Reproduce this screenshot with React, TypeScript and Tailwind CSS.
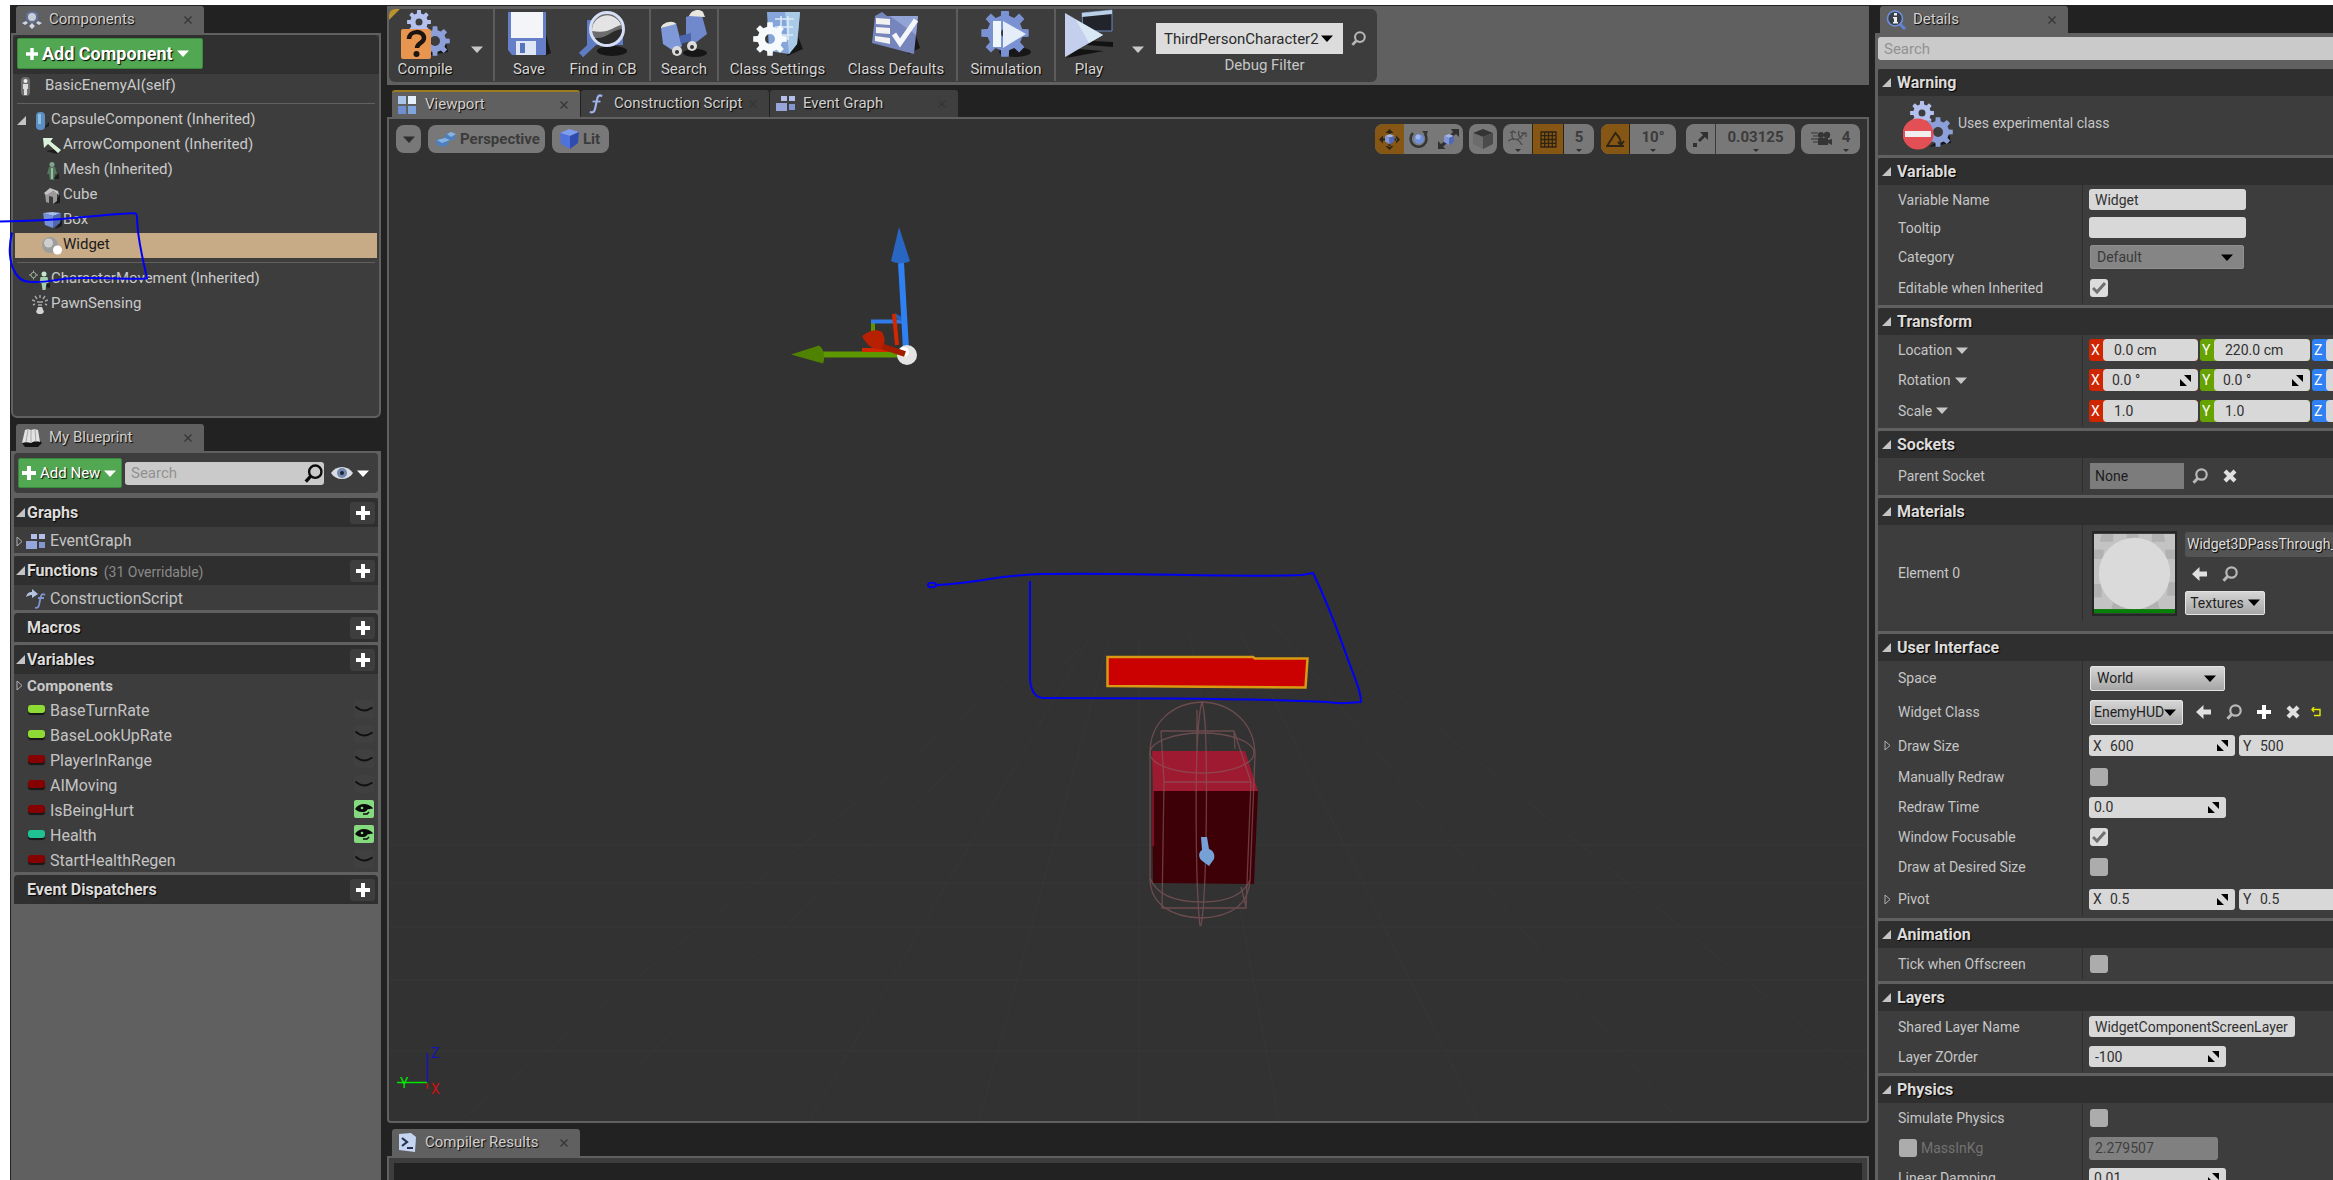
import { useState, type ReactNode } from "react";
import clsx from "clsx";

const SHADOW = "[text-shadow:1px_1px_1px_#000]";

/* ---------- small glyphs ---------- */

function Caret({ className = "fill-white" }: { className?: string }) {
  return (
    <svg width="12" height="7" viewBox="0 0 12 7" className={clsx("shrink-0", className)}>
      <path d="M0 0.5h12L6 7z" />
    </svg>
  );
}

function OpenTri() {
  return (
    <svg width="9" height="9" viewBox="0 0 9 9" className="shrink-0 fill-[#c4c4c4]">
      <path d="M9 0v9H0z" />
    </svg>
  );
}

function ClosedTri() {
  return (
    <svg width="7" height="11" viewBox="0 0 7 11" className="shrink-0 fill-none stroke-[#b0b0b0]">
      <path d="M1 1v9l5-4.500z" />
    </svg>
  );
}

function Plus({ size = 14 }: { size?: number }) {
  return (
    <svg width={size} height={size} viewBox="0 0 14 14" className="shrink-0 fill-white">
      <path d="M5 0h4v5h5v4H9v5H5V9H0V5h5z" />
    </svg>
  );
}

function CloseX() {
  return (
    <svg width="8" height="8" viewBox="0 0 8 8" className="shrink-0 fill-none stroke-[#363636]">
      <path d="M0.500 0.500l7 7M7.500 0.500l-7 7" strokeWidth="1.300" />
    </svg>
  );
}

function Magnifier({ size = 16, color = "#b8b8b8", width = 2.2 }: { size?: number; color?: string; width?: number }) {
  return (
    <svg width={size} height={size} viewBox="0 0 16 16" fill="none" stroke={color} className="shrink-0">
      <circle cx="9.500" cy="6.500" r="5.200" strokeWidth={width} />
      <path d="M5.500 10.500L1.500 14.800" strokeWidth={width + 0.8} />
    </svg>
  );
}

function BoldCross() {
  return (
    <svg width="14" height="14" viewBox="0 0 14 14" className="shrink-0 stroke-[#e0e0e0]">
      <path d="M2 2l10 10M12 2L2 12" strokeWidth="4.200" />
    </svg>
  );
}

function LeftArrow() {
  return (
    <svg width="15" height="14" viewBox="0 0 15 14" className="shrink-0 fill-[#e0e0e0]">
      <path d="M0 7l7.500-7v4.500H15v5H7.500V14z" />
    </svg>
  );
}

function SpinMark() {
  return (
    <svg width="11" height="11" viewBox="0 0 11 11" className="shrink-0 fill-black">
      <path d="M4 0h7v7zM0 4l7 7H0z" />
    </svg>
  );
}

function gearPath(cx: number, cy: number, outer: number, inner: number, teeth: number) {
  const step = (Math.PI * 2) / teeth;
  const pts: string[] = [];
  for (let i = 0; i < teeth; i++) {
    const a = i * step;
    [
      [inner, -0.3],
      [outer, -0.2],
      [outer, 0.2],
      [inner, 0.3],
    ].forEach(([r, o]) => {
      const t = a + o * step;
      pts.push(`${(cx + r * Math.cos(t)).toFixed(1)} ${(cy + r * Math.sin(t)).toFixed(1)}`);
    });
  }
  return `M${pts.join("L")}Z`;
}

function Gear({ x, y, r, hole, fill, teeth = 8 }: { x: number; y: number; r: number; hole: number; fill: string; teeth?: number }) {
  const h = `M${x - hole} ${y}a${hole} ${hole} 0 1 0 ${hole * 2} 0a${hole} ${hole} 0 1 0 ${-hole * 2} 0Z`;
  return <path d={gearPath(x, y, r, r * 0.74, teeth) + h} fill={fill} fillRule="evenodd" />;
}

/* ---------- tab icons ---------- */

function GridIcon() {
  return (
    <svg width="18" height="18" viewBox="0 0 18 18">
      <path d="M0 0h8v8H0z" fill="#a9c6ea" />
      <path d="M10 0h8v8h-8z" fill="#e6f2fb" />
      <path d="M0 10h8v8H0z" fill="#6f8fd0" />
      <path d="M10 10h8v8h-8z" fill="#7fa5dc" />
    </svg>
  );
}

function GraphIcon() {
  return (
    <svg width="20" height="17" viewBox="0 0 20 17">
      <path d="M5 1h6v5H5zM13 1h6v5h-6z" fill="#b3bfe6" />
      <path d="M0 8h11v8H0z" fill="#97a6da" />
      <path d="M13 9h6v6h-6z" fill="#8396d0" />
    </svg>
  );
}

function FuncIcon() {
  return (
    <svg width="18" height="20" viewBox="0 0 18 20" fill="none" stroke="#9fb1ea">
      <path d="M15 2.500c-2-2-4-1-4.700 2L8 15c-.7 3-3 4.500-5 2.500" strokeWidth="2.200" />
      <path d="M5.500 7.500h8" strokeWidth="1.800" />
    </svg>
  );
}

function ComponentsIcon() {
  return (
    <svg width="20" height="18" viewBox="0 0 20 18">
      <path d="M4 2l6-2 6 2v7l-6 4-6-4z" fill="#5f7099" />
      <circle cx="10" cy="6" r="4" fill="#c9cdd6" />
      <path d="M0 12l4-2 2 2-3 2zM20 12l-4-2-2 2 3 2zM7 15l3-3 3 3-3 3z" fill="#cfd6e6" />
    </svg>
  );
}

function BookIcon() {
  return (
    <svg width="20" height="18" viewBox="0 0 20 18">
      <path d="M0 14l3 4h13l4-4-3-3H3z" fill="#141414" />
      <path d="M3 1c2-1 4-1 6 0 2-1 5-1 7 0l2 12c-3-1-6-1-9 1-3-1-6-1-9 0z" fill="#e2e2e2" />
      <path d="M9 1v13M6 1L4 13M13 1l1 12" stroke="#a7a7a7" />
    </svg>
  );
}

function DetailsIcon() {
  return (
    <svg width="20" height="20" viewBox="0 0 20 20">
      <path d="M13 13l6 6" stroke="#5f83d8" strokeWidth="3" />
      <circle cx="9" cy="8.500" r="7.500" fill="#3a3f4c" stroke="#6f8fe0" strokeWidth="1.600" />
      <path d="M8 3h3v2.500H8zM7 7h4v5h1v1.500H7V12h1V8.500H7z" fill="#eee" />
    </svg>
  );
}

function ConsoleIcon() {
  return (
    <svg width="18" height="19" viewBox="0 0 18 19">
      <path d="M1 1l12-1 5 4-1 15-16-2z" fill="#c5d4f2" />
      <path d="M4 5l5 4-5 4" fill="none" stroke="#27324a" strokeWidth="2.200" />
      <path d="M9 15h6" stroke="#27324a" strokeWidth="2" />
    </svg>
  );
}

function GearsIcon({ children }: { children: ReactNode }) {
  return (
    <svg width="50" height="50" viewBox="0 0 50 50">
      <path d="M26 47l22-4-2-9z" fill="#151515" />
      <Gear x={19} y={13} r={12} hole={3.5} fill="#b4c1ee" />
      <Gear x={35} y={32} r={15} hole={5} fill="#8d9fd8" />
      {children}
    </svg>
  );
}

/* ---------- toolbar icons ---------- */

const toolIcons = {
  compile: (
    <GearsIcon>
      <rect x="1" y="20" width="30" height="30" rx="2" fill="#e8954f" />
      <path d="M9 30c0-9 15-9 15-1 0 5-7 5-7 10" fill="none" stroke="#1c1510" strokeWidth="4.500" />
      <circle cx="16.500" cy="45" r="3" fill="#1c1510" />
    </GearsIcon>
  ),
  save: (
    <svg width="44" height="46" viewBox="0 0 44 46">
      <path d="M38 20l6 22-6 3z" fill="#1b1b1b" />
      <path d="M1 1h38v43H5l-4-5z" fill="#6580c8" />
      <path d="M4 1h32v26H4z" fill="#f4f5f8" />
      <path d="M9 30h20v14H9z" fill="#dfe6f5" />
      <path d="M13 32h5v10h-5z" fill="#5673bd" />
    </svg>
  ),
  find: (
    <svg width="50" height="48" viewBox="0 0 50 48">
      <ellipse cx="34" cy="41" rx="15" ry="5" fill="#161616" />
      <path d="M9 10h36v25H9z" fill="#5f7bc4" />
      <path d="M18 31L3 45" stroke="#5f7bc4" strokeWidth="6" />
      <circle cx="29" cy="19" r="16.500" fill="#6c6c6c" stroke="#d5def5" strokeWidth="3" />
      <path d="M14 21a15 15 0 0 1 29-6c-8 2-12 9-29 6z" fill="#e4e4e4" />
      <path d="M17 28c12 1 18-9 27-9 0 12-17 22-27 9z" fill="#2b2b2b" />
    </svg>
  ),
  search: (
    <svg width="48" height="48" viewBox="0 0 48 48">
      <ellipse cx="35" cy="43" rx="12" ry="4" fill="#161616" />
      <path d="M1 18l15-5 6 23-7 6-12-8z" fill="#7f98d8" />
      <path d="M26 7l15-5 6 22-13 10-8-7z" fill="#7089cc" />
      <path d="M19 26l12-3v8l-10 3z" fill="#4c66ae" />
      <path d="M1 18c0-5 12-9 15-4zM29 6c2-6 10-8 14-4l2 5z" fill="#e9e6df" />
      <circle cx="17" cy="41" r="5" fill="#dcdcdc" />
      <circle cx="32" cy="36" r="5" fill="#dcdcdc" />
      <circle cx="17" cy="42" r="2" fill="#333" />
      <circle cx="32" cy="37" r="2" fill="#333" />
    </svg>
  ),
  settings: (
    <svg width="50" height="46" viewBox="0 0 50 46">
      <path d="M42 18l8 20-16 7z" fill="#171717" />
      <path d="M14 1h33l-3 32-8 10-20-3z" fill="#86a5da" />
      <path d="M32 1h15l-3 32-8 10z" fill="#a9cbe8" />
      <path d="M22 8h19M22 16h18M26 24h14M28 5v24M35 5v24" stroke="#dcecf8" strokeWidth="1.500" />
      <Gear x={17} y={28} r={17} hole={5} fill="#f6fafc" />
    </svg>
  ),
  defaults: (
    <svg width="48" height="44" viewBox="0 0 48 44">
      <path d="M42 18l6 18-12 6z" fill="#171717" />
      <path d="M3 4l7-4 5 4h31l-4 38L0 31z" fill="#7686bd" />
      <path d="M18 4h28l-2 19z" fill="#92a3d6" />
      <path d="M4 6l14 1v6l-14-1zM4 15l14 1v6l-14-1zM3 24l15 2v6L3 29z" fill="#f2f2f2" />
      <path d="M22 22l6 9L44 8" fill="none" stroke="#f4f6fa" strokeWidth="5" />
    </svg>
  ),
  simulation: (
    <svg width="50" height="46" viewBox="0 0 50 46">
      <ellipse cx="34" cy="41" rx="16" ry="5" fill="#171717" />
      <Gear x={24} y={22} r={24} hole={4} fill="#7b92d2" />
      <path d="M12 10h8v26h-8z" fill="#eef6fa" />
      <path d="M22 10l23 13-23 14z" fill="#e4edf8" />
    </svg>
  ),
  play: (
    <svg width="50" height="50" viewBox="0 0 50 50">
      <path d="M2 49l12-9 26 2zM27 32l22 1v5l-26-2z" fill="#131313" />
      <path d="M18 4l30-3v21H19z" fill="#22242b" stroke="#6c8bbd" />
      <path d="M18 4l30-3v4L18 8z" fill="#b9d0e8" />
      <path d="M1 4l38 22L1 48z" fill="#c3cfec" />
      <path d="M12 11l27 15-14 8z" fill="#d7e8f4" />
    </svg>
  ),
};

/* ---------- shared pieces ---------- */

interface TabProps {
  icon: ReactNode;
  label: string;
  active?: boolean;
  accent?: boolean;
}

function Tab({ icon, label, active = true, accent = false }: TabProps) {
  return (
    <button
      type="button"
      className={clsx(
        "flex h-[27px] w-[188px] shrink-0 items-center rounded-t-[3px] pl-1.5 pr-3 text-left",
        active ? "bg-[#606060]" : "bg-[#3f3f3f]",
        accent && "border-t-2 border-[#9a7b1f]",
      )}
    >
      <span className="flex w-[27px] shrink-0 items-center">{icon}</span>
      <span className={clsx("flex-1 whitespace-nowrap pb-0.5 text-[15px] leading-5 text-[#d0d0d0]", SHADOW)}>{label}</span>
      <CloseX />
    </button>
  );
}

/* ---------- components panel ---------- */

const treeIcons: Record<string, ReactNode> = {
  self: (
    <svg width="12" height="20" viewBox="0 0 12 20">
      <rect x="1" width="9" height="19" rx="4" fill="#6f6f6f" />
      <circle cx="5.500" cy="4" r="2" fill="#eee" />
      <path d="M3 7h5v5H7v6H4v-6H3z" fill="#ddd" />
    </svg>
  ),
  capsule: (
    <svg width="14" height="18" viewBox="0 0 14 18">
      <path d="M8 17l6-3v-4z" fill="#1c1c1c" />
      <rect x="1" width="9" height="18" rx="4" fill="#5b8fc4" />
      <path d="M3 2h3v10H3z" fill="#8fbfe0" />
    </svg>
  ),
  arrow: (
    <svg width="18" height="16" viewBox="0 0 18 16">
      <path d="M3 13l11 3v-5z" fill="#1c1c1c" />
      <path d="M0 0h10L7.500 3.500 18 12l-3 3L5 6l-4 4z" fill="#d9f2d9" />
    </svg>
  ),
  mesh: (
    <svg width="16" height="18" viewBox="0 0 16 18">
      <path d="M9 17l6 0v-6z" fill="#1c1c1c" />
      <circle cx="8" cy="2.500" r="2.500" fill="#7fa58a" />
      <path d="M5 5h6l2 7h-2l-1 6H6l-1-6H3z" fill="#55775f" />
      <path d="M7 6h2v11H7z" fill="#93bf9e" />
    </svg>
  ),
  cube: (
    <svg width="17" height="17" viewBox="0 0 17 17">
      <path d="M9 17l7-1V8z" fill="#1c1c1c" />
      <path d="M1 6l5-3 7 3v8l-4 3V10L5 9v7l-3-1z" fill="#9a9a9a" />
      <path d="M0 6l6-5 8 3 1 4-6-4-7 4z" fill="#c4c4c4" />
    </svg>
  ),
  box: (
    <svg width="19" height="17" viewBox="0 0 19 17">
      <path d="M12 17l7-3V7z" fill="#1c1c1c" />
      <path d="M0 1l9-1 9 1-8 3z" fill="#a6bdf0" />
      <path d="M0 1l10 3v12L2 13z" fill="#7590d8" />
      <path d="M10 4l8-3-1 10-7 5z" fill="#4f68b4" />
    </svg>
  ),
  widget: (
    <svg width="20" height="18" viewBox="0 0 20 18">
      <circle cx="8" cy="8" r="8" fill="#9d9d9d" />
      <circle cx="6.500" cy="6" r="4.500" fill="#cfcfcf" />
      <circle cx="15.500" cy="13" r="4.500" fill="#fff" />
    </svg>
  ),
  movement: (
    <svg width="22" height="20" viewBox="0 0 22 20">
      <circle cx="4.500" cy="5" r="2.600" fill="none" stroke="#9db59d" />
      <path d="M4.500 0.500v2M4.500 7.500v2M0 5h2M7 5h2" stroke="#9db59d" />
      <path d="M13 16l8 2v-5z" fill="#1c1c1c" />
      <circle cx="15" cy="4" r="2.500" fill="#c4e8cf" />
      <path d="M11.500 7h7l1 6h-2l-1 7h-3l-1-7h-2z" fill="#a5cfb1" />
    </svg>
  ),
  sensing: (
    <svg width="16" height="20" viewBox="0 0 16 20" stroke="#a8a8a8" fill="none">
      <path d="M8 0v3M3 1l2 3M13 1l-2 3M0 5l3 1M16 5l-3 1M1 10l2-1M15 10l-2-1M5 7h6M6 10h4" strokeWidth="1.400" />
      <path d="M6 12h4l2 5-2 2H6l-2-2z" fill="#d2d2d2" stroke="none" />
    </svg>
  ),
};

interface TreeRowProps {
  icon: string;
  label: string;
  indent: string;
  open?: boolean;
  selected?: boolean;
}

function TreeRow({ icon, label, indent, open, selected }: TreeRowProps) {
  return (
    <button
      type="button"
      className={clsx(
        "mx-0.5 flex h-[25px] items-center text-left text-[15px] leading-5",
        indent,
        selected ? "bg-[#c7ab87] text-[#1a1a1a]" : "text-[#cacaca]",
      )}
    >
      {open && <OpenTri />}
      <span className={clsx("flex shrink-0 items-center justify-center", open ? "ml-[7px] w-[18px]" : "w-[22px]")}>
        {treeIcons[icon]}
      </span>
      <span className={clsx("whitespace-nowrap pb-1", icon === "self" && "ml-2")}>{label}</span>
    </button>
  );
}

function ComponentsPanel() {
  return (
    <section className="flex h-[413px] shrink-0 flex-col">
      <div className="flex pl-[5px] pt-px">
        <Tab icon={<ComponentsIcon />} label="Components" />
      </div>
      <div className="flex flex-1 flex-col rounded-b-md border-2 border-[#606060] bg-[#3d3d3d]">
        <div className="rounded-t-md bg-[#303030] px-1 pb-[5px] pt-[3px]">
          <button
            type="button"
            className={clsx(
              "flex h-[31px] w-[186px] items-center rounded-[2px] border border-[#3a8a3d] bg-[#52a852] pl-2 text-lg font-bold leading-6 text-white",
              SHADOW,
            )}
          >
            <Plus size={12} />
            <span className="ml-1 whitespace-nowrap">Add Component</span>
            <span className="ml-1 flex"><Caret /></span>
          </button>
        </div>
        <div className="flex flex-col">
          <TreeRow icon="self" label="BasicEnemyAI(self)" indent="" />
          <div className="mx-1 my-1 h-px bg-[#606060]" />
          <TreeRow icon="capsule" label="CapsuleComponent (Inherited)" indent="pl-0.5" open />
          <TreeRow icon="arrow" label="ArrowComponent (Inherited)" indent="pl-[26px]" />
          <TreeRow icon="mesh" label="Mesh (Inherited)" indent="pl-[26px]" />
          <TreeRow icon="cube" label="Cube" indent="pl-[26px]" />
          <TreeRow icon="box" label="Box" indent="pl-[26px]" />
          <TreeRow icon="widget" label="Widget" indent="pl-[26px]" selected />
          <div className="mx-1 mb-1 mt-1 h-px bg-[#606060]" />
          <TreeRow icon="movement" label="CharacterMovement (Inherited)" indent="pl-3.5" />
          <TreeRow icon="sensing" label="PawnSensing" indent="pl-3.5" />
        </div>
      </div>
    </section>
  );
}

/* ---------- my blueprint panel ---------- */

const VARIABLES = [
  { name: "BaseTurnRate", pill: "bg-[#8fdb35]", visible: false },
  { name: "BaseLookUpRate", pill: "bg-[#8fdb35]", visible: false },
  { name: "PlayerInRange", pill: "bg-[#860202]", visible: false },
  { name: "AIMoving", pill: "bg-[#860202]", visible: false },
  { name: "IsBeingHurt", pill: "bg-[#860202]", visible: true },
  { name: "Health", pill: "bg-[#1fc193]", visible: true },
  { name: "StartHealthRegen", pill: "bg-[#860202]", visible: false },
];

function SectionHead({ title, note, open }: { title: string; note?: string; open?: boolean }) {
  return (
    <div className="flex h-[29px] items-center rounded-t-[4px] bg-[#2f2f2f] pl-0.5 pr-[3px]">
      <span className="flex w-[11px]">{open && <OpenTri />}</span>
      <h3 className={clsx("whitespace-nowrap text-base font-bold leading-5 text-[#dcdcdc]", SHADOW)}>{title}</h3>
      {note && <span className="ml-1.5 pt-0.5 text-sm leading-5 text-[#8a8a8a]">{note}</span>}
      <button type="button" aria-label={`Add ${title}`} className="ml-auto flex h-[22px] w-[25px] items-center justify-center rounded-[3px] bg-[#3e3e3e]">
        <Plus size={14} />
      </button>
    </div>
  );
}

function VariableRow({ name, pill, visible }: (typeof VARIABLES)[number]) {
  return (
    <li className="flex h-[25px] items-center pl-3.5 pr-1 pt-[3px]">
      <span className={clsx("mb-1 h-2 w-[17px] rounded-[3px] shadow-[0_2px_1px_#161616]", pill)} />
      <span className="ml-[5px] text-base leading-5 text-[#c4c4c4]">{name}</span>
      <button
        type="button"
        aria-label={`Toggle ${name}`}
        className={clsx("mb-1 ml-auto flex h-[18px] w-5 items-center justify-center rounded-[2px]", visible ? "bg-[#85d97f]" : "bg-[#404040]")}
      >
        {visible ? (
          <svg width="18" height="12" viewBox="0 0 18 12">
            <path d="M0 6c4-6 12-7 18-1l-1 1c-2-1-2 1-4 0-2 3-4 3-6 3-3 0-5-1-7-3z" fill="#0a0a0a" />
            <circle cx="7" cy="5" r="1.300" fill="#85d97f" />
            <path d="M8 11h4l2-2" fill="none" stroke="#0a0a0a" strokeWidth="1.500" />
          </svg>
        ) : (
          <svg width="18" height="8" viewBox="0 0 18 8" fill="none" stroke="#101010">
            <path d="M0.500 1.500c5 5 11 5 17 1" strokeWidth="1.800" />
          </svg>
        )}
      </button>
    </li>
  );
}

function BlueprintPanel() {
  return (
    <section className="flex min-h-0 flex-1 flex-col">
      <div className="flex pl-[5px]">
        <Tab icon={<BookIcon />} label="My Blueprint" />
      </div>
      <div className="flex flex-1 flex-col gap-[3px] bg-[#606060] px-[3px] pt-0.5">
        <div className="mb-0.5 flex h-10 items-center rounded-[4px] bg-[#3d3d3d] pl-1">
          <button
            type="button"
            className={clsx(
              "flex h-[30px] w-[104px] items-center rounded-[2px] border border-[#3a8a3d] bg-[#52a852] pl-[3px] text-[15px] leading-5 text-white",
              SHADOW,
            )}
          >
            <Plus size={14} />
            <span className="ml-1 whitespace-nowrap">Add New</span>
            <span className="ml-1 flex"><Caret /></span>
          </button>
          <label className="ml-[3px] flex h-[23px] w-[199px] items-center rounded-[3px] bg-[#cacaca] pl-1.5 pr-px">
            <input aria-label="Search blueprint" placeholder="Search" className="min-w-0 flex-1 bg-transparent text-[15px] leading-5 outline-none placeholder:text-[#929292]" />
            <Magnifier size={19} color="#0c0c0c" width={2} />
          </label>
          <button type="button" aria-label="View options" className="ml-[7px] flex items-center gap-1">
            <svg width="22" height="14" viewBox="0 0 22 14">
              <path d="M0 7c5-8 17-8 22 0-5 8-17 8-22 0z" fill="#d9dce2" />
              <circle cx="11" cy="7" r="5" fill="#7288ad" />
              <circle cx="11" cy="7" r="2" fill="#1d2433" />
            </svg>
            <Caret />
          </button>
        </div>
        <div className="bg-[#3d3d3d]">
          <SectionHead title="Graphs" open />
          <div className="flex h-[26px] items-center pl-0.5 pt-0.5 text-base leading-5 text-[#c4c4c4]">
            <ClosedTri />
            <span className="ml-[3px] mr-1 flex"><GraphIcon /></span>
            EventGraph
          </div>
        </div>
        <div className="bg-[#3d3d3d]">
          <SectionHead title="Functions" note="(31 Overridable)" open />
          <div className="flex h-[25px] items-center pl-3 pt-0.5 text-base leading-5 text-[#c4c4c4]">
            <svg width="20" height="20" viewBox="0 0 20 20" className="mr-1" fill="none">
              <path d="M0 8c1-4 3-5 6-5V0l6 5-6 4V6C3 6 2 7 0 8z" fill="#b5c4e4" />
              <path d="M19 6c-3-2-4 0-4.500 3L13 16c-.6 2.500-2 3.500-4 2.500M12 9h6" stroke="#7f95d2" strokeWidth="1.800" />
            </svg>
            ConstructionScript
          </div>
        </div>
        <SectionHead title="Macros" />
        <div className="bg-[#3d3d3d]">
          <SectionHead title="Variables" open />
          <div className="flex h-[23px] items-center pl-0.5 text-[15px] font-bold leading-5 text-[#c8c8c8]">
            <ClosedTri />
            <span className="ml-1">Components</span>
          </div>
          <ul>
            {VARIABLES.map((v) => (
              <VariableRow key={v.name} {...v} />
            ))}
          </ul>
        </div>
        <SectionHead title="Event Dispatchers" />
      </div>
    </section>
  );
}

/* ---------- toolbar ---------- */

function ToolButton({ icon, label, width }: { icon: ReactNode; label: string; width: string }) {
  return (
    <button type="button" className={clsx("flex shrink-0 flex-col items-center", width)}>
      <span className="flex h-[50px] items-center">{icon}</span>
      <span className={clsx("whitespace-nowrap text-[15px] leading-5 text-[#d6d6d6]", SHADOW)}>{label}</span>
    </button>
  );
}

function Divider() {
  return <div className="h-[72px] w-0.5 shrink-0 bg-[#5c5c5c]" />;
}

function Toolbar() {
  return (
    <div className="mt-px h-[79px] bg-[#606060] py-[3px] pl-0.5">
      <div className="flex h-[73px] w-[988px] overflow-hidden rounded-md bg-[#3d3d3d]">
        <svg width="11" height="11" viewBox="0 0 11 11" className="-mr-[11px] fill-[#b8922a]"><path d="M0 0h11L0 11z" /></svg>
        <ToolButton icon={toolIcons.compile} label="Compile" width="ml-1.5 w-[60px]" />
        <button type="button" aria-label="Compile options" className="ml-4 mr-[10px] pt-2"><Caret className="fill-[#c8c8c8]" /></button>
        <Divider />
        <ToolButton icon={toolIcons.save} label="Save" width="w-[68px]" />
        <ToolButton icon={toolIcons.find} label="Find in CB" width="mr-1.5 w-[80px]" />
        <Divider />
        <ToolButton icon={toolIcons.search} label="Search" width="w-[66px]" />
        <Divider />
        <ToolButton icon={toolIcons.settings} label="Class Settings" width="w-[117px]" />
        <ToolButton icon={toolIcons.defaults} label="Class Defaults" width="w-[120px]" />
        <Divider />
        <ToolButton icon={toolIcons.simulation} label="Simulation" width="w-24" />
        <Divider />
        <ToolButton icon={toolIcons.play} label="Play" width="w-[66px]" />
        <button type="button" aria-label="Play options" className="ml-2.5 pt-2"><Caret className="fill-[#c8c8c8]" /></button>
        <div className="ml-3 flex flex-col pt-3.5">
          <div className="flex items-center">
            <label className="relative flex h-[31px] w-[187px] items-center bg-[#dcdcdc]">
              <select aria-label="Debug Filter" className="h-full w-full appearance-none pl-2 text-[15px] leading-5 text-[#2a2a2a] outline-none">
                <option>ThirdPersonCharacter2</option>
              </select>
              <span className="pointer-events-none absolute right-2.5 flex"><Caret className="fill-black" /></span>
            </label>
            <span className="ml-2 flex"><Magnifier size={15} /></span>
          </div>
          <span className="w-[217px] text-center text-[15px] leading-[22px] text-[#c6c6c6]">Debug Filter</span>
        </div>
      </div>
    </div>
  );
}

/* ---------- viewport ---------- */

const PILL = "flex items-center bg-[#787878] text-[15px] font-bold leading-5 text-[#3b3b3b]";

function DownValue({ text, width }: { text: string; width: string }) {
  return (
    <button type="button" className={clsx("flex h-full flex-col items-center justify-center pt-1", width)}>
      <span className="leading-4">{text}</span>
      <svg width="6" height="4" viewBox="0 0 6 4" className="mt-1 fill-[#303030]"><path d="M0 0h6L3 3z" /></svg>
    </button>
  );
}

function MiniCube({ x, y, s }: { x: number; y: number; s: number }) {
  return (
    <g transform={`translate(${x} ${y}) scale(${s})`}>
      <path d="M0 2l5-2 5 2-5 2z" fill="#a5b6e6" />
      <path d="M0 2l5 2v7L0 8z" fill="#7f96d8" />
      <path d="M10 2L5 4v7l5-3z" fill="#4f69b8" />
    </g>
  );
}

function ViewportBar() {
  return (
    <div className="absolute inset-x-0 top-0 flex items-center gap-[7px] px-[7px] pt-[5px]">
      <button type="button" aria-label="Viewport options" className={clsx(PILL, "h-7 w-[25px] justify-center rounded-lg")}>
        <Caret className="fill-[#2e2e2e]" />
      </button>
      <button type="button" className={clsx(PILL, "h-7 w-[117px] rounded-lg pl-2")}>
        <svg width="20" height="16" viewBox="0 0 20 16">
          <path d="M0 9l9-3 2-4 8 1v5l-6 2-1 4-7 2-5-3z" fill="#4f7fbd" />
          <path d="M1 9l8-2 5 2-8 3zM11 3l4-2 5 2-5 3z" fill="#86b3e2" />
        </svg>
        <span className="ml-1">Perspective</span>
      </button>
      <button type="button" className={clsx(PILL, "h-7 w-[57px] rounded-lg pl-2")}>
        <svg width="19" height="20" viewBox="0 0 19 20">
          <path d="M0 4l9-4 10 3-9 4z" fill="#7d9df0" />
          <path d="M0 4l10 3v13L1 15z" fill="#4f72dc" />
          <path d="M19 3l-9 4v13l8-6z" fill="#2f4cae" />
        </svg>
        <span className="ml-1">Lit</span>
      </button>

      <div className={clsx(PILL, "ml-auto h-[30px] overflow-hidden rounded-lg")}>
        <button type="button" aria-label="Move" className="flex h-full w-[29px] items-center justify-center bg-[#855614]">
          <svg width="21" height="21" viewBox="0 0 21 21" fill="#2e2413">
            <path d="M10.500 0l4 4h-8zM10.500 21l4-4h-8zM0 10.500l4-4v8zM21 10.500l-4-4v8zM9.500 3h2v15h-2zM3 9.500h15v2H3z" />
            <MiniCube x={6} y={5} s={0.95} />
          </svg>
        </button>
        <button type="button" aria-label="Rotate" className="flex h-full w-[29px] items-center justify-center">
          <svg width="20" height="20" viewBox="0 0 20 20" fill="none">
            <path d="M4 4a8 8 0 1 0 12 1" stroke="#353535" strokeWidth="2.500" />
            <path d="M13 2h6l-2 5z" fill="#353535" />
            <circle cx="10" cy="10" r="5" fill="#6f8fd8" />
            <circle cx="9" cy="8" r="2.500" fill="#9fb6ee" />
          </svg>
        </button>
        <button type="button" aria-label="Scale" className="flex h-full w-[30px] items-center justify-center">
          <svg width="21" height="20" viewBox="0 0 21 20" fill="#303030">
            <path d="M13 0h8v8l-3-3-5 4-2-2 4-4zM0 20v-8l3 3 4-3 2 2-4 4 3 2z" />
            <MiniCube x={6} y={5} s={1} />
          </svg>
        </button>
      </div>
      <button type="button" aria-label="Coordinate space" className={clsx(PILL, "-ml-px h-[30px] w-[28px] justify-center rounded-lg")}>
        <svg width="20" height="20" viewBox="0 0 20 20">
          <path d="M0 4l10-4 10 4-10 4z" fill="#343434" />
          <path d="M0 4l10 4v12L0 15z" fill="#6c6c6c" />
          <path d="M20 4L10 8v12l10-5z" fill="#4b4b4b" />
        </svg>
      </button>
      <div className={clsx(PILL, "-ml-px h-[30px] overflow-hidden rounded-lg")}>
        <button type="button" aria-label="Surface snapping" className="flex h-full w-[29px] flex-col items-center justify-center pt-1">
          <svg width="19" height="15" viewBox="0 0 19 15" fill="none" stroke="#4a4a4a" strokeWidth="1.300">
            <path d="M0 11c6-4 11-2 14 4M5 1C3 5 4 8 6 10M2 3l3-2 3 2M9 10l8-7M13 3h5v4M11 1c-1 3 0 6 3 8" />
          </svg>
          <svg width="6" height="4" viewBox="0 0 6 4" className="mt-1 fill-[#303030]"><path d="M0 0h6L3 3z" /></svg>
        </button>
        <button type="button" aria-label="Grid snapping" className="flex h-full w-8 items-center justify-center border-x border-[#2e2413] bg-[#855614]">
          <svg width="17" height="17" viewBox="0 0 17 17" fill="none" stroke="#2e2413" strokeWidth="1.300">
            <path d="M1 1h15v15H1zM4.700 1v15M8.500 1v15M12.300 1v15M1 4.700h15M1 8.500h15M1 12.300h15" />
          </svg>
        </button>
        <DownValue text="5" width="w-[30px]" />
      </div>
      <div className={clsx(PILL, "h-[30px] overflow-hidden rounded-lg")}>
        <button type="button" aria-label="Rotation snapping" className="flex h-full w-[29px] items-center justify-center border-r border-[#2e2413] bg-[#855614]">
          <svg width="19" height="18" viewBox="0 0 19 18" fill="none" stroke="#2e2413" strokeWidth="1.800">
            <path d="M10 2L1 16h17M9 3c4 3 6 7 6 12M12 12l3 3 3-4" />
          </svg>
        </button>
        <DownValue text="10°" width="w-[46px]" />
      </div>
      <div className={clsx(PILL, "ml-[3px] h-[30px] overflow-hidden rounded-lg")}>
        <button type="button" aria-label="Scale snapping" className="flex h-full w-[30px] items-center justify-center border-r border-[#3a3a3a]">
          <svg width="15" height="15" viewBox="0 0 15 15" fill="#303030">
            <path d="M7 0h8v8l-3-3-5 5-2-2 5-5zM0 11h4v4H0z" />
          </svg>
        </button>
        <DownValue text="0.03125" width="w-[79px]" />
      </div>
      <div className={clsx(PILL, "-ml-px h-[30px] rounded-lg")}>
        <span className="ml-2.5 flex">
          <svg width="21" height="16" viewBox="0 0 21 16" fill="#353535">
            <path d="M0 2h7M2 5h6M0 8h7M2 11h6" stroke="#4b4b4b" strokeWidth="1.300" />
            <circle cx="10" cy="4" r="3" />
            <circle cx="16" cy="4" r="3.200" />
            <path d="M7 7h10v2l4-1v6l-4-2v2H7z" />
          </svg>
        </span>
        <DownValue text="4" width="w-[28px]" />
      </div>
    </div>
  );
}

function Scene() {
  return (
    <svg viewBox="0 0 1478 1002" preserveAspectRatio="xMidYMid slice" className="h-full w-full">
      {/* floor grid */}
      <g stroke="#373737" strokeWidth="1" fill="none">
        <path d="M0 932h1478M0 861h1478M0 808h1478M0 764h1478M0 726h1478" />
        <path d="M620 560L70 1002M690 530L190 1002M700 520L420 1002M720 520L590 1002M750 520V1002M800 510L890 1002M850 510L1090 1002M880 500L1290 1002M940 520L1478 960" />
      </g>

      {/* transform gizmo */}
      <g fill="none">
        <path d="M484 224V203" stroke="#5c9600" strokeWidth="4" />
        <path d="M482 202.500h32" stroke="#2f7be8" strokeWidth="4" />
        <path d="M505 196l11 6" stroke="#2562bd" strokeWidth="4" />
        <path d="M512 144l5 86" stroke="#2f80f2" strokeWidth="6" />
        <path d="M505 195l3 31" stroke="#d22700" strokeWidth="4" />
        <path d="M428 235.500h84" stroke="#5e9800" strokeWidth="6" />
        <path d="M473 231h30" stroke="#d22700" strokeWidth="4" />
      </g>
      <path d="M510 108l11 34c-5 3-14 3-19 0z" fill="#2866c2" />
      <path d="M402 235.500l28-9c6 4 6 14 4 18z" fill="#4f8200" />
      <circle cx="518" cy="236" r="10" fill="#e4e4e4" />
      <circle cx="515" cy="233" r="5" fill="#fff" />
      <path d="M492 227l24 8" stroke="#a31c00" strokeWidth="6" />
      <path d="M473 217c6-5 14-8 20-4 4 6 3 13-1 17-8 1-14-3-19-13z" fill="#b72000" />

      {/* health bar widget */}
      <path d="M718.500 538H864l2 1.500h52.500l-2 29-198-1.500z" fill="#cb0000" stroke="#d89a12" strokeWidth="2.500" />

      {/* enemy cube */}
      <path d="M763 632h93l13 40-105 1z" fill="#9e1a30" />
      <path d="M763 672h106l-4 93-101-1z" fill="#3e0007" />
      <path d="M764 672v55" stroke="#7a1424" strokeWidth="2" />

      {/* collision wireframe */}
      <g fill="none" stroke="#8a5a5e" strokeWidth="1.300" opacity="0.650">
        <path d="M761 634c0-30 22-50 52-51 30 1 53 22 53 53l-5 126c-2 26-22 36-49 37-30-1-51-14-51-40z" />
        <ellipse cx="813" cy="634" rx="52" ry="20" />
        <path d="M761 759c6 16 24 24 52 24 26 0 42-8 48-22" />
        <path d="M772 612h73l1 18M772 612l3 51h87l-17-51M775 663l-2 126h84l5-126M813 583c-9 30-6 190-2 224M813 583c7 20 5 190-1 224M808 631v-40M852 768l5 20" />
      </g>
      <path d="M801 718h6l2 12c5 2 6 6 5 10l-5 7-8-6c-3-4-2-8 1-10z" fill="#75a1d6" transform="translate(11 0)" />

      {/* pen annotation */}
      <path
        d="M548 466c-3 3-9 3-9 0s8-3 8 0c36-1 62-10 106-11 95-2 190 4 260 1l11-2c20 41 30 74 40 100 5 12 8 23 8 29-10 1-24 2-34 0-86-4-190-4-283-4-10 0-13-8-14-18V462"
        fill="none"
        stroke="#0000f5"
        strokeWidth="2"
        strokeLinejoin="round"
      />

      {/* world axes */}
      <g fill="none" strokeWidth="1.500">
        <path d="M8 963.500h30" stroke="#00e600" />
        <path d="M38.500 963V934" stroke="#1414b8" />
        <path d="M38.500 964v6" stroke="#d01010" />
      </g>
      <g fontFamily="Roboto, sans-serif" fontSize="14">
        <text x="42" y="939" fill="#1414b8">Z</text>
        <text x="11" y="969" fill="#00e600">Y</text>
        <text x="42" y="975" fill="#d01010">X</text>
      </g>
    </svg>
  );
}

function Viewport() {
  return (
    <div className="relative min-h-0 flex-1 overflow-hidden rounded-b-[4px] border-2 border-[#606060] bg-[#323232]">
      <Scene />
      <ViewportBar />
    </div>
  );
}

/* ---------- details panel ---------- */

function Category({ title, children }: { title: string; children: ReactNode }) {
  return (
    <section className="mb-[3px] bg-[#3d3d3d] pb-0.5">
      <h3 className={clsx("flex h-[27px] items-center gap-1.5 rounded-tl-[4px] bg-[#2f2f2f] pl-1 text-base font-bold leading-5 text-[#dcdcdc]", SHADOW)}>
        <OpenTri />
        {title}
      </h3>
      {children}
    </section>
  );
}

interface RowProps {
  label: string;
  height: string;
  caret?: boolean;
  expandable?: boolean;
  children: ReactNode;
}

function Row({ label, height, caret, expandable, children }: RowProps) {
  return (
    <div className={clsx("flex", height)}>
      <div className="flex w-[205px] shrink-0 items-center border-r border-[#2e2e2e] pl-1.5 text-sm leading-5 text-[#c6c6c6]">
        <span className="flex w-3.5">{expandable && <ClosedTri />}</span>
        <span className="whitespace-nowrap">{label}</span>
        {caret && <span className="ml-1 flex"><Caret className="fill-[#c6c6c6]" /></span>}
      </div>
      <div className="flex shrink-0 items-center pl-1.5">{children}</div>
    </div>
  );
}

function TextBox({ label, value, width, spin, prefix }: { label: string; value: string; width: string; spin?: boolean; prefix?: string }) {
  return (
    <label className={clsx("flex h-[21px] shrink-0 items-center rounded-[3px] bg-[#d8d8d8] pr-[7px] text-sm leading-5 text-[#303030]", width)}>
      {prefix && <span className="mr-[7px] w-2.5">{prefix}</span>}
      <input aria-label={label} defaultValue={value} className="min-w-0 flex-1 bg-transparent outline-none" />
      {spin && <SpinMark />}
    </label>
  );
}

const AXES = [
  { name: "X", color: "bg-[#cf2600]", width: "w-[109px]" },
  { name: "Y", color: "bg-[#66a300]", width: "w-[110px]" },
  { name: "Z", color: "bg-[#2f80f2]", width: "w-[109px]" },
];

function Vector({ label, values, spin, pad }: { label: string; values: string[]; spin?: boolean; pad: string }) {
  return (
    <div className="flex gap-0.5">
      {AXES.map((axis, i) => (
        <label key={axis.name} className={clsx("flex h-[22px] rounded-[3px] text-sm leading-[22px]", axis.color, axis.width)}>
          <span className="w-3.5 pl-0.5 text-white">{axis.name}</span>
          <span className={clsx("flex min-w-0 flex-1 items-center rounded-[4px] bg-[#d8d8d8] pr-[7px] text-[#303030]", pad)}>
            <input aria-label={`${label} ${axis.name}`} defaultValue={values[i]} className="min-w-0 flex-1 bg-transparent outline-none" />
            {spin && <SpinMark />}
          </span>
        </label>
      ))}
    </div>
  );
}

function Check({ label, initial = false }: { label: string; initial?: boolean }) {
  const [on, setOn] = useState(initial);
  return (
    <label className="relative ml-px flex h-[18px] w-[18px]">
      <input
        type="checkbox"
        aria-label={label}
        checked={on}
        onChange={() => setOn(!on)}
        className="h-[18px] w-[18px] appearance-none rounded-[3px] bg-[#acacac] checked:bg-[#dcdcdc]"
      />
      {on && (
        <svg width="14" height="12" viewBox="0 0 14 12" className="pointer-events-none absolute left-0.5 top-[3px] fill-none stroke-[#707070]">
          <path d="M1 6l4 4 8-9" strokeWidth="3" />
        </svg>
      )}
    </label>
  );
}

function Dropdown({ label, value, className, caret = "right-1.5" }: { label: string; value: string; className: string; caret?: string }) {
  return (
    <span className={clsx("relative ml-px flex items-center rounded-[2px] border text-sm leading-5", className)}>
      <select aria-label={label} className="h-full w-full appearance-none outline-none">
        <option>{value}</option>
      </select>
      <span className={clsx("pointer-events-none absolute flex", caret)}><Caret className="fill-black" /></span>
    </span>
  );
}

const LIGHT = "border-[#e4e4e4] bg-gradient-to-b from-[#d6d6d6] to-[#a6a6a6] text-[#1f1f1f]";

function DetailsPanel() {
  return (
    <aside className="flex w-[458px] shrink-0 flex-col overflow-hidden">
      <div className="flex pl-[5px] pt-px">
        <Tab icon={<DetailsIcon />} label="Details" />
      </div>
      <div className="flex min-h-0 flex-1 flex-col overflow-hidden bg-[#606060] pl-[3px] pt-1">
        <input aria-label="Search details" placeholder="Search" className="mb-[9px] h-[23px] shrink-0 rounded-l-[3px] bg-[#cacaca] pl-1.5 text-[15px] leading-5 outline-none placeholder:text-[#929292]" />

        <Category title="Warning">
          <div className="flex h-[57px] items-center pl-[25px] text-sm leading-5 text-[#c6c6c6]">
            <GearsIcon>
              <circle cx="15" cy="34" r="15.500" fill="#e25055" />
              <path d="M2 31h26v6H2z" fill="#f0eeee" />
            </GearsIcon>
            <span className="ml-[5px] pb-1">Uses experimental class</span>
          </div>
        </Category>

        <Category title="Variable">
          <Row label="Variable Name" height="h-[29px]"><TextBox label="Variable Name" value="Widget" width="w-[157px] pl-1.5" /></Row>
          <Row label="Tooltip" height="h-[27px]"><TextBox label="Tooltip" value="" width="w-[157px] pl-1.5" /></Row>
          <Row label="Category" height="h-[32px]">
            <Dropdown label="Category" value="Default" caret="right-2.5" className="h-[24px] w-[154px] border-[#8f8f8f] bg-[#858585] pl-1.5 text-[#3a3a3a]" />
          </Row>
          <Row label="Editable when Inherited" height="h-[30px]"><Check label="Editable when Inherited" initial /></Row>
        </Category>

        <Category title="Transform">
          <Row label="Location" height="h-[30px]" caret><Vector label="Location" values={["0.0 cm", "220.0 cm", "0.0 cm"]} pad="pl-[11px]" /></Row>
          <Row label="Rotation" height="h-[30px]" caret><Vector label="Rotation" values={["0.0 °", "0.0 °", "0.0 °"]} spin pad="pl-[9px]" /></Row>
          <Row label="Scale" height="h-[31px]" caret><Vector label="Scale" values={["1.0", "1.0", "1.0"]} pad="pl-[11px]" /></Row>
        </Category>

        <Category title="Sockets">
          <Row label="Parent Socket" height="h-[35px]">
            <input aria-label="Parent Socket" defaultValue="None" className="ml-px h-[26px] w-[94px] bg-[#7c7c7c] pl-[5px] text-sm leading-5 text-[#1c1c1c] outline-none" />
            <span className="ml-2 flex items-center gap-[15px]"><Magnifier /><BoldCross /></span>
          </Row>
        </Category>

        <Category title="Materials">
          <Row label="Element 0" height="h-[104px] pb-2">
            <div className="ml-[3px] border-2 border-[#262626]">
              <svg width="81" height="81" viewBox="0 0 84 82" className="block">
                <path d="M0 0h84v78H0z" fill="#c3c3c3" />
                <path d="M8 0h12v8H6zM34 0h12v6H34zM60 0h12l2 8H60zM0 16h10v10H0zM74 16h10v10H74zM0 52h8v14H0zM76 50h8v14h-8zM20 70h12v8H18zM54 70h12l2 8H54z" fill="#b1b1b1" />
                <circle cx="42" cy="41" r="37" fill="#dadada" />
                <path d="M0 78h84v4H0z" fill="#048004" />
              </svg>
            </div>
            <div className="ml-2 flex flex-col">
              <span className={clsx("flex h-[25px] w-[149px] items-center rounded-[3px] bg-[#545454] pl-0.5 text-sm leading-5 text-[#dedede]", SHADOW)}>
                Widget3DPassThrough_
              </span>
              <span className="flex h-[34px] items-center gap-[15px] pl-[7px]"><LeftArrow /><Magnifier /></span>
              <button type="button" className={clsx("flex h-6 w-20 items-center justify-center gap-1 rounded-[2px] border text-sm leading-5", LIGHT)}>
                Textures<Caret className="fill-black" />
              </button>
            </div>
          </Row>
        </Category>

        <Category title="User Interface">
          <Row label="Space" height="h-[34px]"><Dropdown label="Space" value="World" caret="right-2" className={clsx(LIGHT, "h-[25px] w-[135px] pl-1.5")} /></Row>
          <Row label="Widget Class" height="h-[34px]">
            <Dropdown label="Widget Class" value="EnemyHUD" className={clsx(LIGHT, "h-[25px] w-[93px] pl-[3px]")} />
            <span className="ml-[13px] flex items-center gap-[15px]">
              <LeftArrow /><Magnifier /><Plus size={14} /><BoldCross />
              <svg width="11" height="10" viewBox="0 0 11 10" className="-ml-1 fill-none stroke-[#e6e600]">
                <path d="M3 0L1 2.500 3 5M1 2.500h8v6H3" strokeWidth="1.400" />
              </svg>
            </span>
          </Row>
          <Row label="Draw Size" height="h-[33px]" expandable>
            <div className="flex gap-1">
              <TextBox label="Draw Size X" value="600" prefix="X" width="w-[146px] pl-1" spin />
              <TextBox label="Draw Size Y" value="500" prefix="Y" width="w-[146px] pl-1" spin />
            </div>
          </Row>
          <Row label="Manually Redraw" height="h-[30px]"><Check label="Manually Redraw" /></Row>
          <Row label="Redraw Time" height="h-[30px]"><TextBox label="Redraw Time" value="0.0" width="w-[137px] pl-[5px]" spin /></Row>
          <Row label="Window Focusable" height="h-[30px]"><Check label="Window Focusable" initial /></Row>
          <Row label="Draw at Desired Size" height="h-[30px]"><Check label="Draw at Desired Size" /></Row>
          <Row label="Pivot" height="h-[34px]" expandable>
            <div className="flex gap-1">
              <TextBox label="Pivot X" value="0.5" prefix="X" width="w-[146px] pl-1" spin />
              <TextBox label="Pivot Y" value="0.5" prefix="Y" width="w-[146px] pl-1" spin />
            </div>
          </Row>
        </Category>

        <Category title="Animation">
          <Row label="Tick when Offscreen" height="h-[31px]"><Check label="Tick when Offscreen" /></Row>
        </Category>

        <Category title="Layers">
          <Row label="Shared Layer Name" height="h-[31px]"><TextBox label="Shared Layer Name" value="WidgetComponentScreenLayer" width="w-[206px] pl-1.5" /></Row>
          <Row label="Layer ZOrder" height="h-[29px]"><TextBox label="Layer ZOrder" value="-100" width="w-[137px] pl-1.5" spin /></Row>
        </Category>

        <Category title="Physics">
          <Row label="Simulate Physics" height="h-[30px]"><Check label="Simulate Physics" /></Row>
          <div className="flex h-[30px]">
            <div className="flex w-[205px] shrink-0 items-center gap-1 border-r border-[#2e2e2e] pl-5 text-sm leading-5 text-[#727272]">
              <Check label="Override MassInKg" />
              MassInKg
            </div>
            <div className="flex items-center pl-1.5">
              <input aria-label="MassInKg" disabled defaultValue="2.279507" className="h-[23px] w-[129px] rounded-[3px] bg-[#808080] pl-1.5 text-sm leading-5 text-[#3f3f3f]" />
            </div>
          </div>
          <Row label="Linear Damping" height="h-[30px]"><TextBox label="Linear Damping" value="0.01" width="w-[137px] pl-[5px]" spin /></Row>
        </Category>
      </div>
    </aside>
  );
}

export default function App() {
  return (
    <div className="relative flex h-screen flex-col overflow-hidden bg-white pl-2.5 pt-[5px] font-['Roboto','Liberation_Sans',sans-serif]">
      <div className="flex min-h-0 flex-1 gap-1.5 bg-[#222] pl-px">
        <div className="flex w-[370px] shrink-0 flex-col gap-1.5">
          <ComponentsPanel />
          <BlueprintPanel />
        </div>

        <main className="flex min-w-0 flex-1 flex-col">
          <Toolbar />
          <div className="mt-[5px] flex gap-px pl-[5px]">
            <Tab icon={<GridIcon />} label="Viewport" accent />
            <Tab icon={<FuncIcon />} label="Construction Script" active={false} />
            <Tab icon={<GraphIcon />} label="Event Graph" active={false} />
          </div>
          <Viewport />
          <div className="mt-1.5 flex pl-[5px]">
            <Tab icon={<ConsoleIcon />} label="Compiler Results" />
          </div>
          <div className="h-6 border-x-2 border-t-2 border-[#606060] bg-[#3d3d3d] px-[5px] pt-[5px]">
            <div className="h-full bg-[#222]" />
          </div>
        </main>

        <DetailsPanel />
      </div>

      {/* pen mark drawn over the component tree */}
      <svg width="150" height="290" viewBox="0 0 150 290" className="pointer-events-none absolute left-0 top-0 fill-none stroke-[#0000f5]">
        <path
          d="M0 221.500c60 0 90-6 127-8 9-1 10 0 10 3 0 22 6 42 10 62-30 1-58-2-80 0-16 2-26 5-40 3-10-1-16-14-17-26-1-10 0-15 2-23"
          strokeWidth="2"
          strokeLinejoin="round"
        />
      </svg>
    </div>
  );
}
